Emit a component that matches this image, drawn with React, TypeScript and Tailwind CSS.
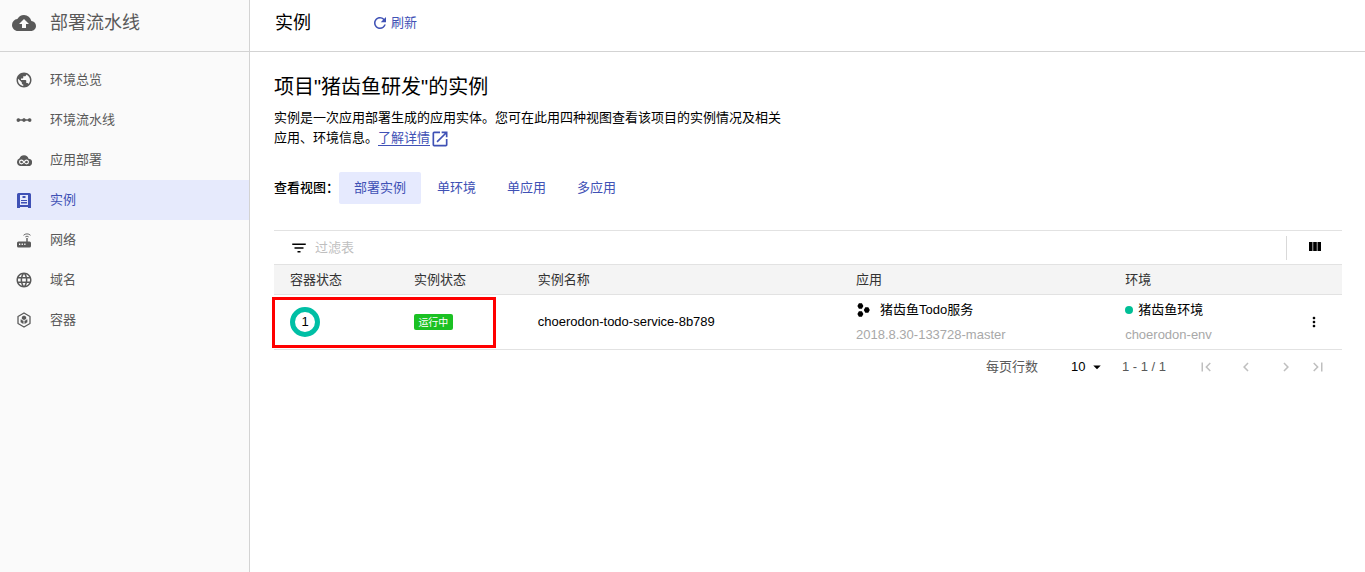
import type { ReactNode } from 'react'
import {
  MdArrowDropDown,
  MdBackup,
  MdChevronLeft,
  MdChevronRight,
  MdFilterList,
  MdFirstPage,
  MdLanguage,
  MdLastPage,
  MdLinearScale,
  MdMoreVert,
  MdOpenInNew,
  MdPublic,
  MdRefresh,
} from 'react-icons/md'

// cloud with an infinity sign inside
function DeployIcon() {
  return (
    <svg viewBox="0 0 24 24" className="size-4" fill="none">
      <path
        d="M18.8 10A7 7 0 0 0 5.400 9.500 6 6 0 0 0 6.200 21h12.200a5.500 5.500 0 0 0 .4-11Z"
        fill="currentColor"
      />
      <path
        d="M12 15c-1.500-2-2.500-2.800-3.800-2.800a2.800 2.800 0 0 0 0 5.600c1.300 0 2.300-.8 3.800-2.800s2.500-2.800 3.800-2.800a2.800 2.800 0 0 1 0 5.600c-1.300 0-2.300-.8-3.800-2.800Z"
        stroke="#fafafa"
        strokeWidth="1.800"
      />
    </svg>
  )
}

function InstanceIcon() {
  return (
    <svg viewBox="0 0 16 16" className="size-4" fill="currentColor">
      <path
        fillRule="evenodd"
        d="M2.500 1h11A1.500 1.500 0 0 1 15 2.500V16h-3v-1H4v1H1V2.500A1.500 1.500 0 0 1 2.500 1ZM4 3v10h8V3H4Z"
      />
      <path d="M6.500 4h3v2h-3zM5 8h6v1H5zM5 10h6v1.500H5z" />
    </svg>
  )
}

// router body with antenna and signal waves
function NetworkIcon() {
  return (
    <svg viewBox="0 0 16 16" className="size-4" fill="none">
      <path
        fillRule="evenodd"
        d="M2.500 9.500h7.800V6h1.400v3.500h1.800A1.500 1.500 0 0 1 15 11v3a1.500 1.500 0 0 1-1.500 1.500h-11A1.500 1.500 0 0 1 1 14v-3a1.500 1.500 0 0 1 1.500-1.500ZM3 11.500V13h1.300v-1.500H3Zm2.600 0V13h1.300v-1.500H5.600Zm2.600 0V13h1.300v-1.500H8.200Z"
        fill="currentColor"
      />
      <path
        d="M7.500 3.300a5 5 0 0 1 7 0M9.300 4.900a2.500 2.500 0 0 1 3.400 0"
        stroke="currentColor"
        strokeWidth=".9"
      />
    </svg>
  )
}

// hexagonal outline around a small cube
function ContainerIcon() {
  return (
    <svg viewBox="0 0 24 24" className="size-4" fill="none" stroke="currentColor">
      <path d="M12 1.500 21 6.700v10.600l-9 5.200-9-5.200V6.700l9-5.200Z" strokeWidth="1.900" strokeLinejoin="round" />
      <path
        d="m12 5.500 3 1.800v3L12 12l-3-1.700v-3l3-1.800ZM7.200 11.200l3.800 2.200v4.200l-3.800-2.200v-4.200Zm9.600 0L13 13.400v4.200l3.800-2.200v-4.200Z"
        fill="currentColor"
        strokeWidth=".5"
      />
    </svg>
  )
}

function AppIcon() {
  return (
    <svg viewBox="0 0 14 14" className="size-3.5" fill="currentColor">
      <path d="M2.900.3h3l1.500 2.700-1.500 2.700h-3L1.400 3 2.900.3ZM9.300 4.300h3L13.800 7l-1.500 2.700h-3L7.800 7l1.500-2.700ZM2.900 8.300h3L7.400 11l-1.500 2.700h-3L1.400 11l1.500-2.700Z" />
    </svg>
  )
}

function ColumnsIcon() {
  return (
    <svg viewBox="0 0 12 9" className="h-[9px] w-3" fill="currentColor">
      <path d="M0 0h3.500v9H0zM4.200 0h3.600v9H4.200zM8.500 0H12v9H8.500z" />
    </svg>
  )
}

const MENU: { label: string; icon: ReactNode }[] = [
  { label: '环境总览', icon: <MdPublic size={18} /> },
  { label: '环境流水线', icon: <MdLinearScale size={18} /> },
  { label: '应用部署', icon: <DeployIcon /> },
  { label: '实例', icon: <InstanceIcon /> },
  { label: '网络', icon: <NetworkIcon /> },
  { label: '域名', icon: <MdLanguage size={18} /> },
  { label: '容器', icon: <ContainerIcon /> },
]

const VIEWS = ['部署实例', '单环境', '单应用', '多应用']

const PAGE_BUTTONS = [
  { label: '第一页', icon: <MdFirstPage size={18} />, box: 'w-8' },
  { label: '上一页', icon: <MdChevronLeft size={18} />, box: 'w-12' },
  { label: '下一页', icon: <MdChevronRight size={18} />, box: 'w-8' },
  { label: '最后一页', icon: <MdLastPage size={18} />, box: 'w-8' },
]

function Sidebar() {
  return (
    <aside className="w-[250px] shrink-0 border-r border-[#d3d3d3] bg-[#fafafa] text-[#595959]">
      <div className="flex h-[52px] items-center gap-3.5 border-b border-[#d3d3d3] pb-1.5 pl-3 text-lg">
        <MdBackup size={24} />
        部署流水线
      </div>
      <nav className="pt-2">
        {MENU.map((m) => (
          <a
            key={m.label}
            href="#"
            className={
              m.label === '实例'
                ? 'flex h-10 items-center bg-[#e6eafc] pl-[15px] text-[#3f51b5]'
                : 'flex h-10 items-center pl-[15px]'
            }
          >
            <span className="flex w-[18px] justify-center">{m.icon}</span>
            <span className="pl-[17px]">{m.label}</span>
          </a>
        ))}
      </nav>
    </aside>
  )
}

function InstanceTable() {
  return (
    <div className="relative">
      <table className="w-full table-fixed border-collapse text-left">
        <thead>
          <tr className="h-[30px] border-y border-[#e2e2e2] bg-[#f4f4f4] text-[#333]">
            <th className="w-[11.6%] pl-4 font-normal">容器状态</th>
            <th className="w-[11.6%] pl-4 font-normal">实例状态</th>
            <th className="w-[29.8%] pl-4 font-normal">实例名称</th>
            <th className="w-[25.2%] pl-4 font-normal">应用</th>
            <th className="pl-4 font-normal">环境</th>
            <th className="w-14" aria-label="操作" />
          </tr>
        </thead>
        <tbody>
          <tr className="h-[55px] border-b border-[#e2e2e2]">
            <td className="pl-4">
              <span className="flex size-[30px] items-center justify-center rounded-full border-[5px] border-[#00bfa5]">
                1
              </span>
            </td>
            <td className="pl-4">
              <span className="flex h-4 w-[39px] items-center justify-center rounded-xs bg-[#1bc123] text-[10px] text-white">
                运行中
              </span>
            </td>
            <td className="pl-4">choerodon-todo-service-8b789</td>
            <td className="pl-4">
              <div className="flex h-[25px] items-center gap-2.5">
                <AppIcon />
                猪齿鱼Todo服务
              </div>
              <div className="h-[25px] leading-[25px] text-[#a8a8a8]">2018.8.30-133728-master</div>
            </td>
            <td className="pl-4">
              <div className="flex h-[25px] items-center gap-[5px]">
                <span className="size-2 rounded-full bg-[#00bf96]" />
                猪齿鱼环境
              </div>
              <div className="h-[25px] leading-[25px] text-[#a8a8a8]">choerodon-env</div>
            </td>
            <td>
              <button type="button" aria-label="更多" className="flex w-full justify-center">
                <MdMoreVert size={16} />
              </button>
            </td>
          </tr>
        </tbody>
      </table>
      {/* highlight around the two status columns */}
      <div className="pointer-events-none absolute top-[33px] -left-0.5 h-[51px] w-[21%] border-3 border-[#f00]" />
    </div>
  )
}

export default function App() {
  return (
    <div className="flex min-h-screen bg-white font-['Liberation_Sans','Noto_Sans_CJK_SC',sans-serif] text-[13px] text-black">
      <Sidebar />
      <div className="min-w-0 flex-1">
        <header className="flex h-[52px] items-center gap-[60px] border-b border-[#d3d3d3] pb-1.5 pl-[25px]">
          <h1 className="text-lg">实例</h1>
          <button type="button" className="flex items-center gap-0.5 text-[#3f51b5]">
            <MdRefresh size={18} />
            刷新
          </button>
        </header>

        <main className="pr-[23px] pl-6">
          <h2 className="pt-[21px] text-xl leading-7">项目"猪齿鱼研发"的实例</h2>
          <p className="mt-[7px] max-w-[512px] leading-5">
            实例是一次应用部署生成的应用实体。您可在此用四种视图查看该项目的实例情况及相关应用、环境信息。
            <a href="#" className="text-[#3f51b5]">
              <span className="border-b border-[#3f51b5]">了解详情</span>
              <MdOpenInNew size={20} className="-my-1 inline" />
            </a>
          </p>

          <div className="mt-6 flex items-center gap-px">
            <span className="w-16 whitespace-nowrap font-medium">查看视图：</span>
            {VIEWS.map((v, i) => (
              <button
                key={v}
                type="button"
                className={
                  i === 0
                    ? 'h-8 rounded-xs bg-[#e6eafe] px-[15px] text-[#3f51b5]'
                    : 'h-8 px-[15px] text-[#3f51b5]'
                }
              >
                {v}
              </button>
            ))}
          </div>

          <div className="mt-[26px] flex h-[34px] items-center border-t border-[#e2e2e2] pl-4">
            <MdFilterList size={18} />
            <input
              aria-label="过滤表"
              placeholder="过滤表"
              className="ml-[7px] min-w-0 flex-1 outline-none placeholder:text-[#bfbfbf]"
            />
            <button
              type="button"
              aria-label="选择列"
              className="flex h-6 w-14 items-center justify-center border-l border-[#d9d9d9] pb-0.5"
            >
              <ColumnsIcon />
            </button>
          </div>

          <InstanceTable />

          <div className="flex h-[34px] items-center justify-end pr-2 text-[#595959]">
            <label htmlFor="page-size">每页行数</label>
            <span className="relative ml-[33px] flex items-center text-black">
              <select id="page-size" className="w-[35px] appearance-none outline-none">
                <option>10</option>
              </select>
              <MdArrowDropDown size={18} className="pointer-events-none absolute right-0" />
            </span>
            <span className="mr-6 ml-4">1 - 1 / 1</span>
            {PAGE_BUTTONS.map((b) => (
              <button
                key={b.label}
                type="button"
                aria-label={b.label}
                disabled
                className={`flex justify-center text-[#bfbfbf] ${b.box}`}
              >
                {b.icon}
              </button>
            ))}
          </div>
        </main>
      </div>
    </div>
  )
}
